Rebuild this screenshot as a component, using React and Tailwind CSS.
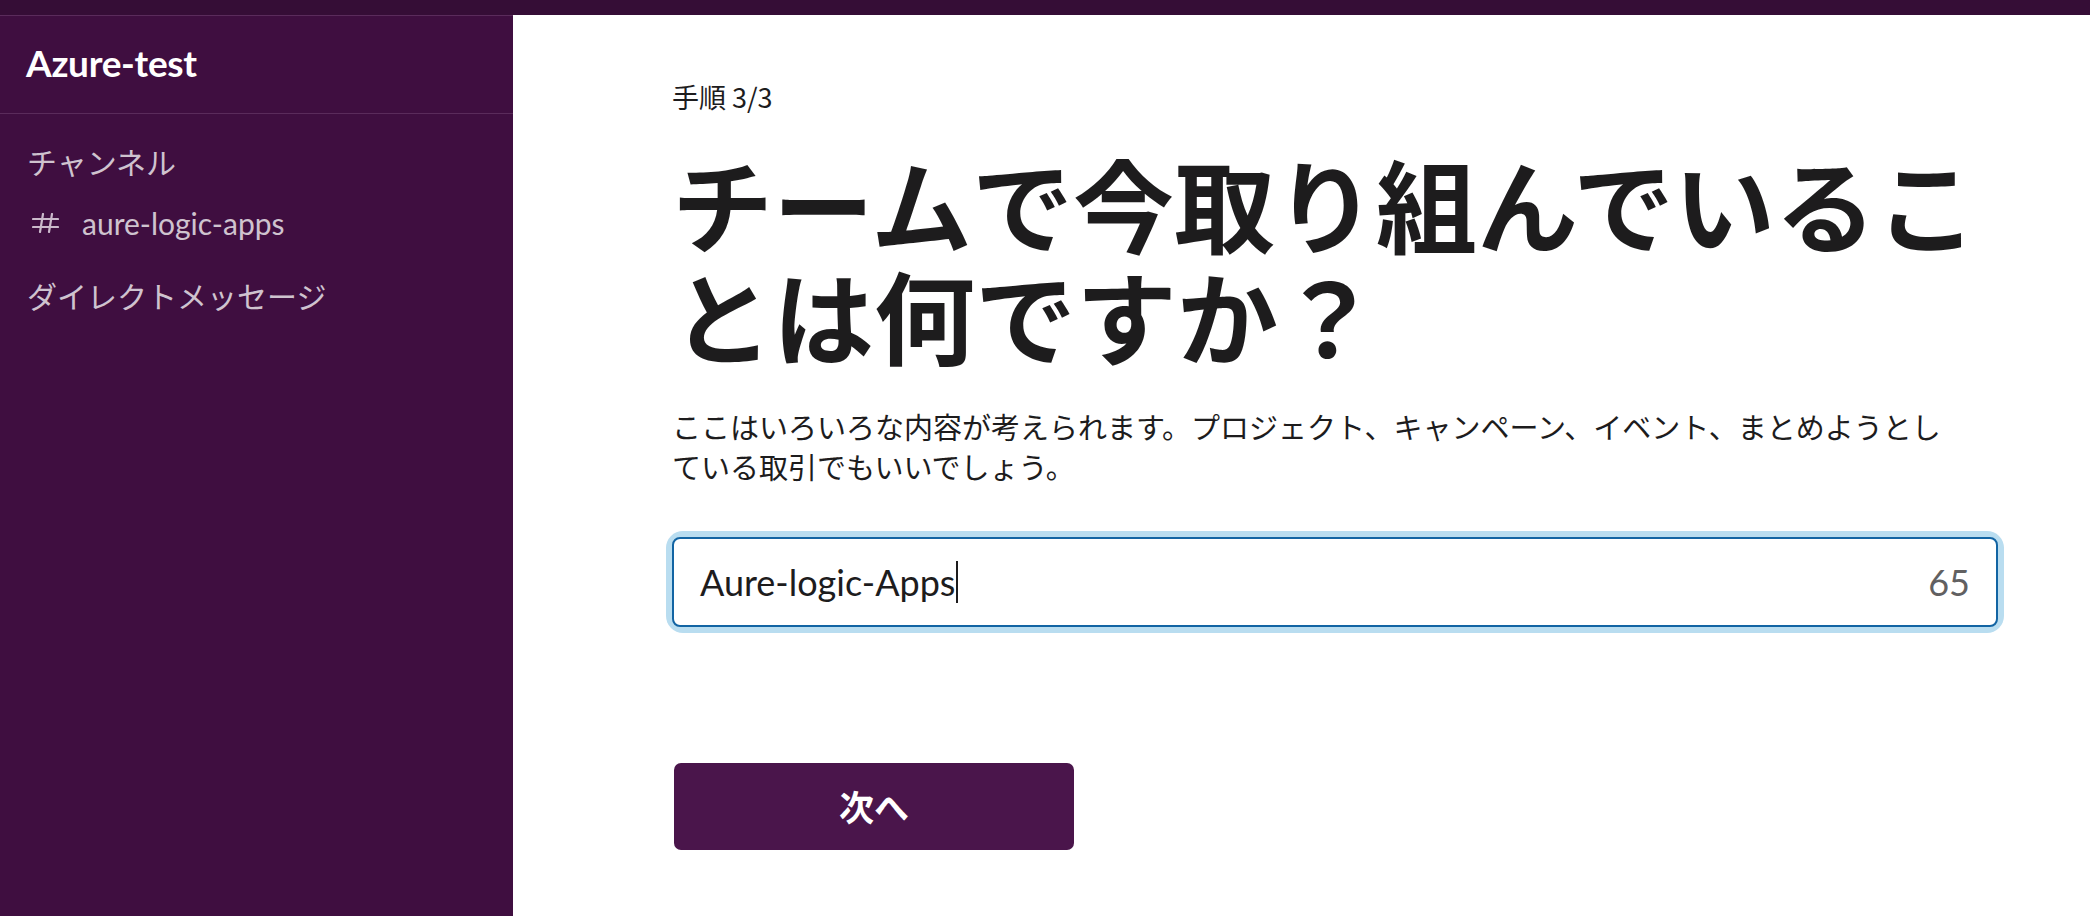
import React from 'react';

const jp = "font-['Lato','Noto_Sans_CJK_JP',sans-serif]";

function Hash() {
  return (
    <svg width="27" height="20" viewBox="0 0 27 20" fill="none" stroke="currentColor" strokeWidth="2.2" strokeLinecap="round">
      <line x1="11" y1="1" x2="8" y2="19" />
      <line x1="20" y1="1" x2="17" y2="19" />
      <line x1="1" y1="6" x2="26" y2="6" />
      <line x1="1" y1="14" x2="26" y2="14" />
    </svg>
  );
}

function Sidebar() {
  return (
    <aside className={`w-[513px] shrink-0 bg-[#3f0e40] border-t border-[#5a2b5b] text-[#cfc3cf] ${jp}`}>
      <div className="h-[98px] border-b border-[#5a2b5b] flex items-center pl-[26px] pb-[3px]">
        <h1 className="text-[37px] font-bold text-white tracking-[-0.3px]">Azure-test</h1>
      </div>
      <div className="pt-[28px]">
        <div className="pl-[27px] h-[40px] flex items-center text-[30px]">チャンネル</div>
        <div className="mt-[21px] h-[40px] flex items-center text-[30px]">
          <span className="w-[82px] pl-[32px] flex items-center text-[#cbb9cb]"><Hash /></span>
          <span>aure-logic-apps</span>
        </div>
        <div className="mt-[33px] pl-[27px] h-[40px] flex items-center text-[30px]">ダイレクトメッセージ</div>
      </div>
    </aside>
  );
}

export default function App() {
  return (
    <div className="w-[2090px] h-[916px] flex flex-col overflow-hidden bg-white">
      <div className="h-[15px] bg-[#350d36] shrink-0" />
      <div className="flex flex-1 min-h-0">
        <Sidebar />
        <main className={`flex-1 pl-[159px] pr-[92px] pt-[67px] text-[#1d1c1d] ${jp}`}>
          <div className="w-[1326px]">
            <p className="text-[27px] leading-[30px] font-['Noto_Sans_CJK_JP',sans-serif]">手順 3/3</p>
            <h2 className="mt-[34px] text-[101px] leading-[112px] font-bold font-['Noto_Sans_CJK_JP',sans-serif] whitespace-nowrap">
              チームで今取り組んでいるこ<br />とは何ですか？
            </h2>
            <p className="mt-[36px] text-[29px] leading-[40px] font-['Noto_Sans_CJK_JP',sans-serif] whitespace-nowrap">
              ここはいろいろな内容が考えられます。プロジェクト、キャンペーン、イベント、まとめようとし<br />ている取引でもいいでしょう。
            </p>
            <div className="mt-[51px] rounded-[11px] ring-[6px] ring-[#b9ddf0]">
              <div className="h-[90px] rounded-[8px] border-2 border-[#1264a3] flex items-center justify-between pl-[26px] pr-[26px]">
                <div className="flex items-center text-[36px] font-['Lato',sans-serif] text-[#1d1c1d]">
                  <span>Aure-logic-Apps</span>
                  <span className="w-[2px] h-[42px] bg-[#1d1c1d] ml-[1px]" />
                </div>
                <span className="text-[36px] font-['Lato',sans-serif] text-[#616061]">65</span>
              </div>
            </div>
            <button className="mt-[136px] ml-[2px] w-[400px] h-[87px] rounded-[7px] bg-[#4a154b] text-white text-[35px] font-bold font-['Noto_Sans_CJK_JP',sans-serif]">
              次へ
            </button>
          </div>
        </main>
      </div>
    </div>
  );
}
